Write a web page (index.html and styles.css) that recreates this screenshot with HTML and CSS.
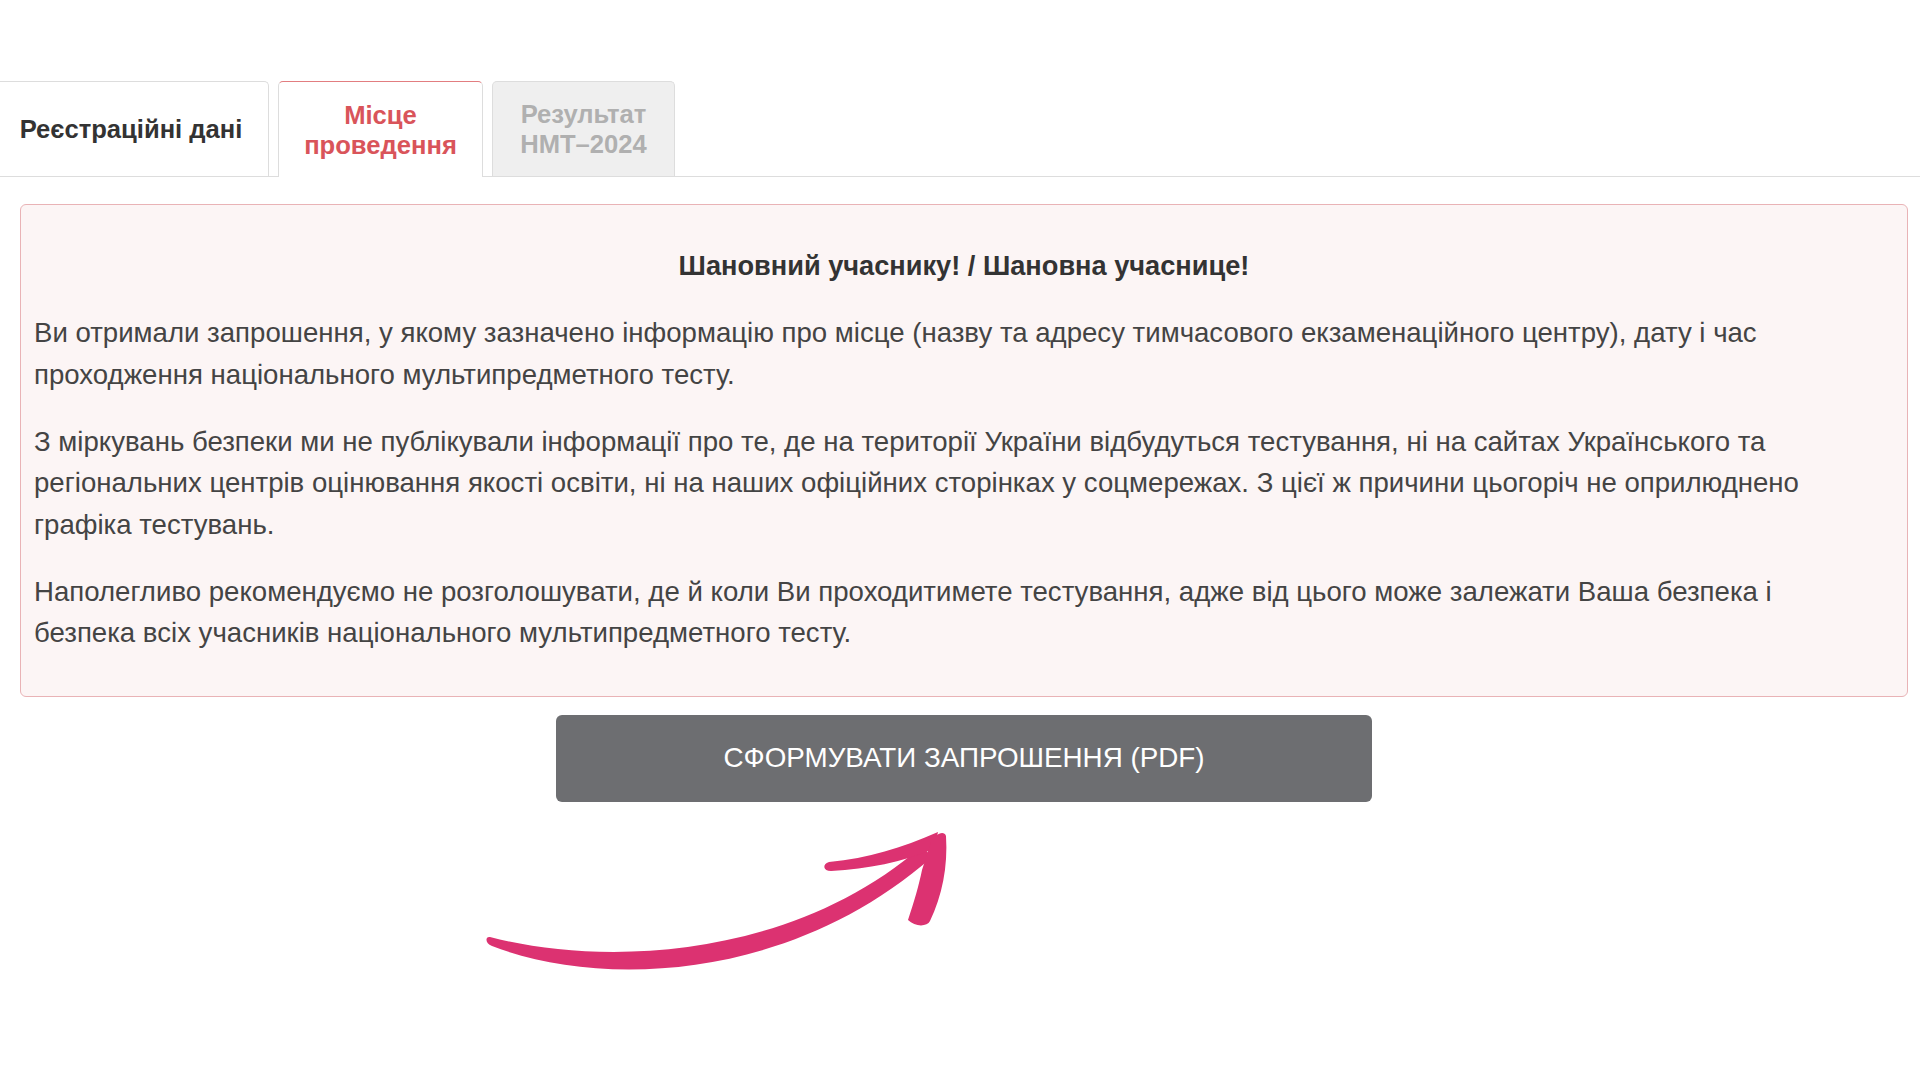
FILE: index.html
```html
<!DOCTYPE html>
<html lang="uk">
<head>
<meta charset="utf-8">
<title>Місце проведення</title>
<link rel="stylesheet" href="styles.css">
</head>
<body>
<div class="page">
  <nav class="tabs">
    <div class="tab tab-first">Реєстраційні дані</div>
    <div class="tab tab-active">Місце<br>проведення</div>
    <div class="tab tab-disabled">Результат<br>НМТ–2024</div>
  </nav>
  <main class="content">
    <section class="alert">
      <h2 class="alert-title">Шановний учаснику! / Шановна учаснице!</h2>
      <p>Ви отримали запрошення, у якому зазначено інформацію про місце (назву та адресу тимчасового екзаменаційного центру), дату і час проходження національного мультипредметного тесту.</p>
      <p>З міркувань безпеки ми не публікували інформації про те, де на території України відбудуться тестування, ні на сайтах Українського та регіональних центрів оцінювання якості освіти, ні на наших офіційних сторінках у соцмережах. З цієї ж причини цьогоріч не оприлюднено графіка тестувань.</p>
      <p>Наполегливо рекомендуємо не розголошувати, де й коли Ви проходитимете тестування, адже від цього може залежати Ваша безпека і безпека всіх учасників національного мультипредметного тесту.</p>
    </section>
    <button class="btn-pdf" type="button">Сформувати запрошення (PDF)</button>
  </main>
  <svg class="arrow" width="1920" height="1080" viewBox="0 0 1920 1080" aria-hidden="true">
    <g fill="#dc3271">
      <path d="M490 937 C 600 966, 790 961, 922 846 L 932 857 C 790 982, 600 988, 492 946 C 485 944, 485 936, 490 937 Z"/>
      <path d="M938 832 C 901 848, 869 858, 829 862 C 822 864, 823 871, 831 871 C 869 869, 901 862, 934 849 Z"/>
      <path d="M946 836 C 948 867, 942 896, 930 921 C 927 927, 915 927, 908 920 C 914 902, 919 885, 922 870 L 931 842 C 935 834, 944 830, 946 836 Z"/>
    </g>
  </svg>
</div>
</body>
</html>
```

FILE: styles.css
```css
html, body {
  margin: 0;
  padding: 0;
  background: #ffffff;
}

body {
  font-family: "Liberation Sans", Arial, Helvetica, sans-serif;
  color: #444444;
}

.page {
  position: relative;
  width: 1920px;
  height: 1080px;
  overflow: hidden;
  padding-top: 81px;
  box-sizing: border-box;
}

.tabs {
  display: flex;
  align-items: flex-end;
  gap: 9px;
  border-bottom: 1px solid #dddddd;
  height: 95px;
}

.tab {
  box-sizing: border-box;
  height: 95px;
  padding: 0 20px;
  display: flex;
  align-items: center;
  justify-content: center;
  text-align: center;
  font-size: 25.6px;
  line-height: 30px;
  font-weight: bold;
  border: 1px solid #dddddd;
  border-bottom: none;
  border-radius: 5px 5px 0 0;
  color: #333333;
  background: #ffffff;
}

.tab-first {
  margin-left: -7px;
  width: 276px;
}

.tab-active {
  color: #d9545a;
  border-color: #dddddd;
  border-top-color: #e27d80;
  height: 96px;
  margin-bottom: -1px;
  width: 205px;
}

.tab-disabled {
  color: #b0b0b0;
  background: #efefef;
  width: 183px;
}

.content {
  padding: 27px 12px 0 20px;
  display: flex;
  flex-direction: column;
}

.alert {
  background: #fcf5f5;
  border: 1px solid #e9b3b6;
  border-radius: 6px;
  padding: 40px 13px 42px 13px;
  font-size: 27.6px;
  line-height: 41.6px;
}

.alert-title {
  margin: 0 0 25.4px;
  text-align: center;
  font-size: 27.2px;
  line-height: 41.6px;
  font-weight: bold;
  color: #333333;
}

.alert p {
  margin: 0 0 25.4px;
  padding-right: 27px;
}

.alert p:last-child {
  margin-bottom: 0;
}

.btn-pdf {
  align-self: center;
  margin-top: 18px;
  width: 816px;
  height: 87px;
  border: none;
  border-radius: 6px;
  background: #6d6e71;
  color: #ffffff;
  font-family: "Liberation Sans", Arial, Helvetica, sans-serif;
  font-size: 27.8px;
  text-transform: uppercase;
  cursor: pointer;
}

.arrow {
  position: absolute;
  left: 0;
  top: 0;
  pointer-events: none;
}
```
